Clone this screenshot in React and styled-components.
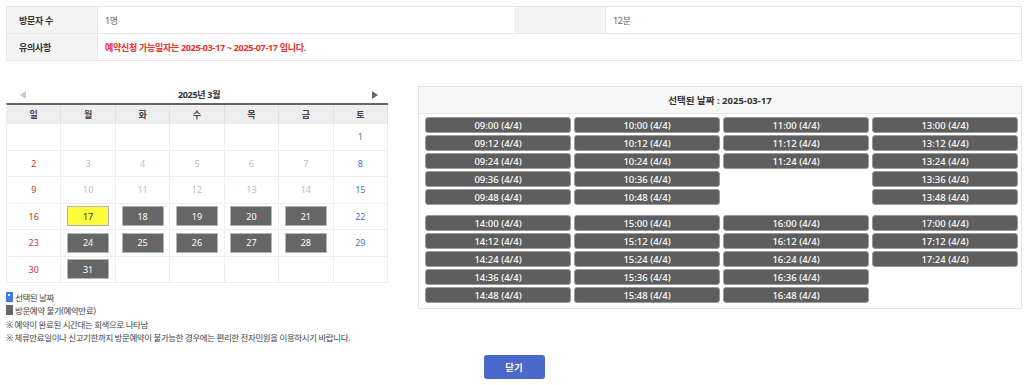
import styled, { createGlobalStyle, css } from 'styled-components'

const GlobalStyle = createGlobalStyle`
    * { box-sizing: border-box; }
    body {
        margin: 0;
        background: #fff;
        font-family: "Noto Sans", "Noto Sans CJK KR", sans-serif;
        color: #333;
    }
`

const Page = styled('div')`
    padding: 6px 2px 6px 6px;
    width: 1024px;
`

const InfoTable = styled('table')`
    width: 1016px;
    border-collapse: collapse;
    border-top: 1px solid #e2e2e2;
    border-bottom: 1px solid #e2e2e2;
    font-size: 9px;
    letter-spacing: -0.3px;
    th, td {
        height: 27px;
        border: 1px solid #e8e8e8;
        text-align: left;
        padding: 0 0 0 7px;
    }
    th {
        background: #f4f4f4;
        color: #333;
        font-weight: 600;
        padding-left: 12px;
    }
    td {
        color: #666;
    }
    tr:first-child th, tr:first-child td { border-top: none; }
`

const Notice = styled('span')`
    color: #e8322b;
    font-weight: 700;
`

const Main = styled('div')`
    display: flex;
    gap: 30px;
    align-items: flex-start;
    margin-top: 25px;
`

const CalendarWrap = styled('div')`
    width: 382px;
`

const CalHeader = styled('div')`
    height: 17px;
    display: flex;
    align-items: center;
    justify-content: space-between;
    padding: 0 10px 0 14px;
    font-size: 9px;
    letter-spacing: -0.3px;
    font-weight: 700;
    color: #333;
`

const Arrow = styled('span')`
    width: 0;
    height: 0;
    border-top: 4px solid transparent;
    border-bottom: 4px solid transparent;
    ${(p) =>
        p.$dir === 'prev'
            ? css`border-right: 6px solid #ccc;`
            : css`border-left: 6px solid #666;`}
`

const CalGrid = styled('div')`
    display: grid;
    grid-template-columns: repeat(7, 1fr);
    grid-template-rows: 19px;
    grid-auto-rows: 26.5px;
    border-top: 2px solid #666;
    border-left: 1px solid #eee;
`

const DayName = styled('div')`
    background: #eeeeee;
    border-right: 1px solid #e2e2e2;
    display: flex;
    align-items: center;
    justify-content: center;
    font-size: 9px;
    font-weight: 700;
    color: #444;
`

const dayColors = {
    sun: '#d9302c',
    sat: '#4571dc',
    off: '#bdbdbd',
    normal: '#333',
}

const DayCell = styled('div')`
    border-right: 1px solid #eee;
    border-bottom: 1px solid #eee;
    display: flex;
    align-items: center;
    justify-content: center;
    font-size: 9px;
    color: ${(p) => dayColors[p.$tone]};
`

const DayBox = styled('span')`
    width: 42px;
    height: 20px;
    display: flex;
    align-items: center;
    justify-content: center;
    border: 1px solid #b5b5b5;
    background: ${(p) => (p.$selected ? '#fdfd3e' : '#666')};
    color: ${(p) => (p.$selected ? '#333' : '#fff')};
`

const Legend = styled('ul')`
    list-style: none;
    margin: 7px 0 0;
    padding: 0;
    font-size: 8.5px;
    letter-spacing: -0.4px;
    color: #444;
    li {
        height: 13.5px;
        display: flex;
        align-items: center;
        gap: 2px;
        white-space: nowrap;
    }
`

const Swatch = styled('span')`
    width: 7px;
    height: 10px;
    display: inline-block;
    background: ${(p) => p.$color};
    position: relative;
    &::after {
        content: '';
        display: ${(p) => (p.$dot ? 'block' : 'none')};
        position: absolute;
        left: 2px;
        top: 2px;
        width: 2px;
        height: 2px;
        background: #fff;
    }
`

const SlotPanel = styled('div')`
    width: 604px;
    border: 1px solid #e4e4e4;
    padding-bottom: 5px;
`

const PanelHeader = styled('div')`
    height: 27px;
    background: #f7f7f7;
    border-bottom: 1px solid #e8e8e8;
    display: flex;
    align-items: center;
    justify-content: center;
    font-size: 9.5px;
    font-weight: 700;
    color: #333;
`

const SlotGroup = styled('div')`
    display: grid;
    grid-template-columns: repeat(4, 146px);
    grid-template-rows: repeat(5, 16px);
    grid-auto-flow: column;
    column-gap: 3px;
    row-gap: 2px;
    padding: 3px 0 0 6px;
    & + & {
        padding-top: 10px;
    }
`

const Slot = styled('div')`
    background: #5e5e5e;
    border: 1px solid #9a9a9a;
    border-radius: 3px;
    color: #fff;
    font-size: 9.5px;
    font-weight: 500;
    display: flex;
    align-items: center;
    justify-content: center;
    visibility: ${(p) => (p.$empty ? 'hidden' : 'visible')};
`

const Footer = styled('div')`
    display: flex;
    justify-content: center;
    padding-top: 11px;
`

const CloseButton = styled('button')`
    width: 61px;
    height: 24px;
    border: none;
    border-radius: 3px;
    background: #4a69c9;
    color: #fff;
    font-family: inherit;
    font-size: 9.5px;
    font-weight: 700;
`

const dayNames = ['일', '월', '화', '수', '목', '금', '토']

function buildDays() {
    const cells = Array(6).fill(null)
    for (let d = 1; d <= 31; d++) cells.push(d)
    while (cells.length % 7) cells.push(null)
    return cells
}

function toneOf(day, index) {
    const col = index % 7
    if (col === 0) return 'sun'
    if (col === 6) return 'sat'
    if (day < 17) return 'off'
    return 'normal'
}

const minutes = ['00', '12', '24', '36', '48']
const morning = [
    ['09', 5],
    ['10', 5],
    ['11', 3],
    ['13', 5],
]
const afternoon = [
    ['14', 5],
    ['15', 5],
    ['16', 5],
    ['17', 3],
]

function SlotColumns({ hours }) {
    return (
        <SlotGroup>
            {hours.flatMap(([h, count]) =>
                minutes.map((m, i) =>
                    i < count ? (
                        <Slot key={h + m}>{`${h}:${m} (4/4)`}</Slot>
                    ) : (
                        <Slot key={h + m} $empty />
                    )
                )
            )}
        </SlotGroup>
    )
}

function App() {
    const days = buildDays()
    return (
        <Page>
            <GlobalStyle />
            <InfoTable>
                <colgroup>
                    <col style={{ width: 91 }} />
                    <col style={{ width: 418 }} />
                    <col style={{ width: 90 }} />
                    <col />
                </colgroup>
                <tbody>
                    <tr>
                        <th>방문자 수</th>
                        <td>1명</td>
                        <th></th>
                        <td>12분</td>
                    </tr>
                    <tr>
                        <th>유의사항</th>
                        <td colSpan={3}>
                            <Notice>
                                예약신청 가능일자는 2025-03-17 ~ 2025-07-17 입니다.
                            </Notice>
                        </td>
                    </tr>
                </tbody>
            </InfoTable>

            <Main>
                <CalendarWrap>
                    <CalHeader>
                        <Arrow $dir="prev" />
                        <span>2025년 3월</span>
                        <Arrow $dir="next" />
                    </CalHeader>
                    <CalGrid>
                        {dayNames.map((n) => (
                            <DayName key={n}>{n}</DayName>
                        ))}
                        {days.map((day, i) => (
                            <DayCell key={i} $tone={day ? toneOf(day, i) : 'normal'}>
                                {day &&
                                    (day >= 17 && i % 7 !== 0 && i % 7 !== 6 ? (
                                        <DayBox $selected={day === 17}>{day}</DayBox>
                                    ) : (
                                        day
                                    ))}
                            </DayCell>
                        ))}
                    </CalGrid>
                    <Legend>
                        <li>
                            <Swatch $color="#3b7cf0" $dot /> 선택된 날짜
                        </li>
                        <li>
                            <Swatch $color="#666" /> 방문예약 불가(예약만료)
                        </li>
                        <li>※ 예약이 완료된 시간대는 회색으로 나타남</li>
                        <li>
                            ※ 체류만료일이나 신고기한까지 방문예약이 불가능한 경우에는 편리한
                            전자민원을 이용하시기 바랍니다.
                        </li>
                    </Legend>
                </CalendarWrap>

                <SlotPanel>
                    <PanelHeader>선택된 날짜 : 2025-03-17</PanelHeader>
                    <SlotColumns hours={morning} />
                    <SlotColumns hours={afternoon} />
                </SlotPanel>
            </Main>

            <Footer>
                <CloseButton>닫기</CloseButton>
            </Footer>
        </Page>
    )
}

export default App
